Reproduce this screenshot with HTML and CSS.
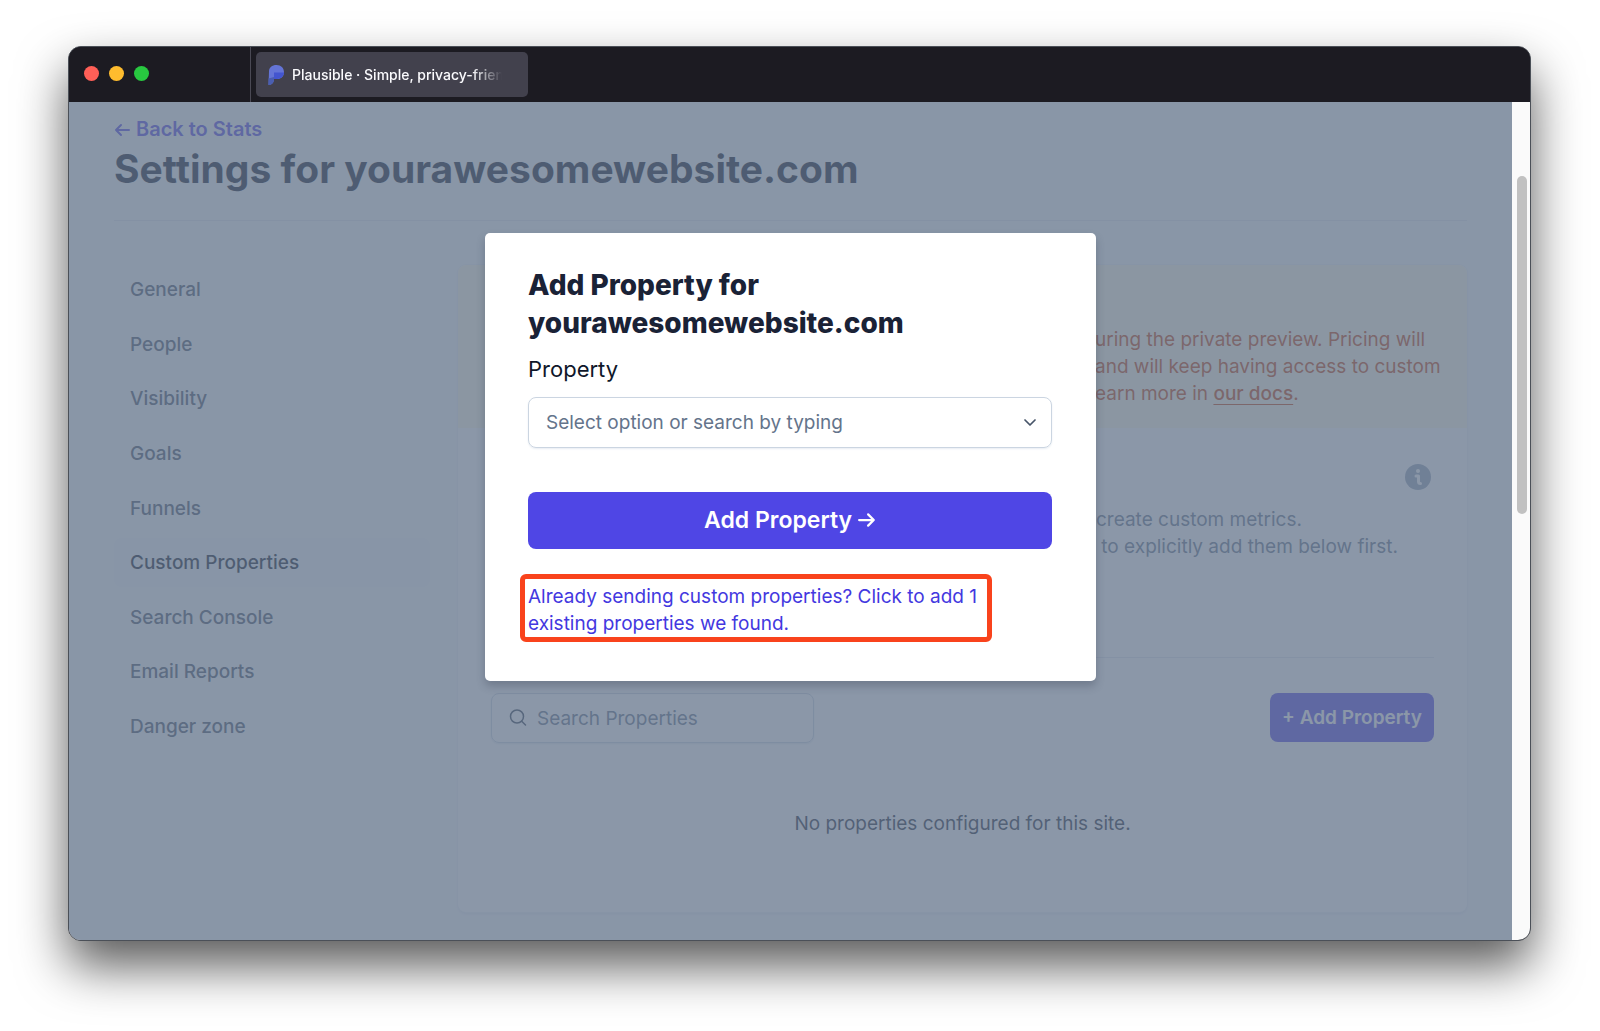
FILE: index.html
```html
<!DOCTYPE html>
<html lang="en">
<head>
<meta charset="utf-8">
<title>Plausible · Simple, privacy-friendly</title>
<link rel="stylesheet" href="styles.css">
</head>
<body>
<div class="window">
  <header class="titlebar">
    <div class="lights">
      <span class="light light-red"></span>
      <span class="light light-yellow"></span>
      <span class="light light-green"></span>
    </div>
    <div class="tab">
      <svg class="favicon" viewBox="0 0 16 20" aria-hidden="true">
        <path d="M1 6.500C1 2.500 4 0 8.500 0S16 3 16 7.200 13 14 9 14H6c0 3-2 6-5.500 6z" fill="#6474d6"/>
        <path d="M6 7.500h10c0 3.500-3 6.500-7 6.500H6z" fill="#4355cf"/>
        <path d="M.5 13.500L6 12v2c0 3.500-2 6-5.500 6z" fill="#4a5eb0"/>
      </svg>
      <span class="tab-title">Plausible · Simple, privacy-friendly</span>
    </div>
  </header>
  <div class="viewport">
    <div class="page">
      <main class="content">
        <a class="back" href="#"><svg class="arrow" viewBox="0 0 16 14" aria-hidden="true"><path d="M15 7H2M7 2L2 7l5 5"/></svg>Back to Stats</a>
        <h1 class="title">Settings for yourawesomewebsite.com</h1>
        <div class="columns">
          <nav class="nav">
            <a href="#">General</a>
            <a href="#">People</a>
            <a href="#">Visibility</a>
            <a href="#">Goals</a>
            <a href="#">Funnels</a>
            <a href="#" class="active">Custom Properties</a>
            <a href="#">Search Console</a>
            <a href="#">Email Reports</a>
            <a href="#">Danger zone</a>
          </nav>
          <section class="card">
            <div class="notice">
              <p>uring the private preview. Pricing will<br>and will keep having access to custom<br>earn more in <a href="#">our docs</a>.</p>
            </div>
            <div class="card-body">
              <div class="intro">
                <a class="info" href="#" aria-label="Documentation">
                  <svg viewBox="0 0 26 26" aria-hidden="true">
                    <circle cx="13" cy="13" r="13" fill="#94a3b8"/>
                    <circle cx="13" cy="7" r="2" fill="#fff"/>
                    <path d="M11 12h2.500v5.500q0 2 2 2" fill="none" stroke="#fff" stroke-width="3" stroke-linecap="round" stroke-linejoin="round"/>
                  </svg>
                </a>
                <p>create custom metrics.<br>&nbsp;to explicitly add them below first.</p>
              </div>
              <div class="toolbar">
                <label class="search">
                  <svg viewBox="0 0 18 18" aria-hidden="true"><circle cx="8" cy="7.500" r="6.500"/><path d="M12.700 12.200L16.500 16"/></svg>
                  <input type="text" placeholder="Search Properties" aria-label="Search Properties">
                </label>
                <button class="add" type="button">+ Add Property</button>
              </div>
              <p class="empty">No properties configured for this site.</p>
            </div>
          </section>
        </div>
      </main>
      <div class="overlay">
        <form class="modal">
          <h2>Add Property for yourawesomewebsite.com</h2>
          <label class="field-label" for="property">Property</label>
          <div class="combo">
            <input id="property" type="text" placeholder="Select option or search by typing">
            <svg viewBox="0 0 12 8" aria-hidden="true"><path d="M1 1l5 5 5-5"/></svg>
          </div>
          <button class="submit" type="button">Add Property <svg class="arrow" viewBox="0 0 16 14" aria-hidden="true"><path d="M1 7h13M9 2l5 5-5 5"/></svg></button>
          <a class="existing" href="#">Already sending custom properties? Click to add 1 existing properties we found.</a>
        </form>
      </div>
    </div>
    <div class="scrollbar"><div class="thumb"></div></div>
  </div>
</div>
</body>
</html>
```
FILE: styles.css
```css
* { box-sizing: border-box; }
body {
  margin: 0;
  padding: 46px 69px 90px 68px;
  background: #fff;
  font-family: Inter, "Liberation Sans", sans-serif;
  font-size: 19px;
  line-height: 27px;
}
h1, h2, p { margin: 0; }
a { color: inherit; text-decoration: none; }
button, input { font: inherit; margin: 0; }

.window {
  display: flex;
  flex-direction: column;
  min-height: calc(100vh - 136px);
  border: 1px solid #4b5058;
  border-radius: 13px;
  overflow: hidden;
  background: #1c1b22;
  box-shadow: 0 25px 50px rgba(0, 0, 0, .65);
}

.titlebar {
  display: flex;
  align-items: center;
  height: 55px;
  background: #1c1b22;
}
.lights {
  display: flex;
  gap: 10px;
  align-self: stretch;
  align-items: center;
  width: 182px;
  padding: 0 0 2px 15px;
  border-right: 1px solid #4a4954;
}
.light { width: 15px; height: 15px; border-radius: 50%; }
.light-red { background: #ff5f57; }
.light-yellow { background: #febc2e; }
.light-green { background: #28c840; }
.tab {
  display: flex;
  align-items: center;
  gap: 8px;
  width: 272px;
  height: 45px;
  margin-left: 5px;
  padding: 0 26px 0 12px;
  border-radius: 5px;
  background: #42414d;
}
.favicon { flex: none; width: 16px; height: 20px; }
.tab-title {
  flex: 1;
  overflow: hidden;
  white-space: nowrap;
  color: #fbfbfe;
  font-size: 14px;
  font-weight: 500;
  mask-image: linear-gradient(to left, transparent, #000 30px);
}

.viewport { display: flex; flex: 1; }
.page { position: relative; flex: 1; background: #f8fafc; }
.content { padding: 14px 45px 27px; }

.arrow {
  width: 16px;
  height: 14px;
  fill: none;
  stroke: currentColor;
  stroke-width: 2;
  stroke-linecap: round;
  stroke-linejoin: round;
}
.back {
  display: flex;
  align-items: center;
  gap: 6px;
  width: fit-content;
  color: #4f46e5;
  font-size: 20px;
  font-weight: 600;
}
.title {
  padding-bottom: 25px;
  border-bottom: 1px solid #e2e8f0;
  color: #0f172a;
  font-size: 39px;
  line-height: 52px;
}
.columns {
  display: grid;
  grid-template-columns: 316px 1fr;
  gap: 28px;
  align-items: start;
  padding-top: 44px;
}
.nav {
  display: flex;
  flex-direction: column;
  justify-content: space-between;
  min-height: 486px;
  color: #475569;
  font-weight: 500;
}
.nav a { padding: 11px 16px; border-radius: 8px; }
.nav .active { background: #f1f5f9; color: #0f172a; }

.card {
  border-radius: 8px;
  background: #fff;
  box-shadow: 0 0 0 1px #eef2f6, 0 2px 3px #e2e8f0;
}
.notice {
  padding: 61px 16px 21px 637px;
  border-radius: 8px 8px 0 0;
  background: #fefce8;
  color: #c2410c;
  white-space: nowrap;
}
.notice a {
  font-weight: 500;
  text-decoration: underline;
  text-decoration-thickness: 1px;
  text-decoration-skip-ink: none;
  text-underline-offset: 4px;
}
.card-body { padding: 36px 33px 75px; }
.intro {
  display: flex;
  flex-direction: column;
  padding: 0 3px 97px 605px;
  border-bottom: 1px solid #e2e8f0;
  color: #64748b;
  white-space: nowrap;
}
.info { align-self: flex-end; width: 26px; height: 26px; margin-bottom: 16px; }
.info svg { display: block; }
.toolbar { display: flex; justify-content: space-between; padding-top: 35px; }
.search {
  display: flex;
  align-items: center;
  gap: 10px;
  width: 323px;
  height: 50px;
  padding: 0 17px;
  border: 1px solid #cbd5e1;
  border-radius: 8px;
  box-shadow: 0 1px 2px #e2e8f0;
}
.search svg {
  flex: none;
  width: 18px;
  height: 18px;
  fill: none;
  stroke: #334155;
  stroke-width: 1.5;
  stroke-linecap: round;
}
input {
  flex: 1;
  min-width: 0;
  padding: 0;
  border: 0;
  outline: 0;
  background: transparent;
}
input::placeholder { color: #64748b; opacity: 1; }
.add {
  width: 164px;
  height: 49px;
  padding: 0;
  border: 0;
  border-radius: 8px;
  background: #4f46e5;
  color: #fff;
  font-weight: 600;
  white-space: nowrap;
}
.empty { padding-top: 67px; color: #1e293b; text-align: center; }

.overlay {
  position: absolute;
  inset: 0;
  display: flex;
  justify-content: center;
  align-items: flex-start;
  padding-top: 131px;
  background: rgba(100, 116, 139, .75);
}
.modal {
  display: flex;
  flex-direction: column;
  width: 611px;
  padding: 33px 44px 39px 43px;
  border-radius: 5px;
  background: #fff;
  box-shadow: 0 5px 8px rgba(30, 41, 59, .25);
}
.modal h2 {
  color: #1a2236;
  font-size: 28px;
  font-weight: 800;
  line-height: 38px;
}
.field-label { margin: 12px 0 13px; color: #0f172a; font-size: 22px; line-height: 30px; }
.combo {
  display: flex;
  align-items: center;
  height: 51px;
  padding: 0 15px 0 17px;
  border: 1px solid #cbd5e1;
  border-radius: 8px;
  box-shadow: 0 1px 2px #e8edf3;
}
.combo svg {
  width: 12px;
  height: 8px;
  fill: none;
  stroke: #475569;
  stroke-width: 1.7;
  stroke-linecap: round;
  stroke-linejoin: round;
}
.submit {
  height: 57px;
  margin: 44px 0 25px;
  border: 0;
  border-radius: 8px;
  background: #4f46e5;
  color: #fff;
  font-size: 23px;
  font-weight: 600;
}
.submit .arrow { width: 18px; height: 16px; }
.existing {
  width: 472px;
  margin-left: -8px;
  padding: 4px 3px 0;
  border: 5px solid #f9431c;
  border-radius: 6px;
  color: #4338e0;
}

.scrollbar { width: 18px; padding: 74px 3px 0 5px; background: #fafafa; }
.thumb { height: 338px; border-radius: 5px; background: #c1c1c1; }
```
